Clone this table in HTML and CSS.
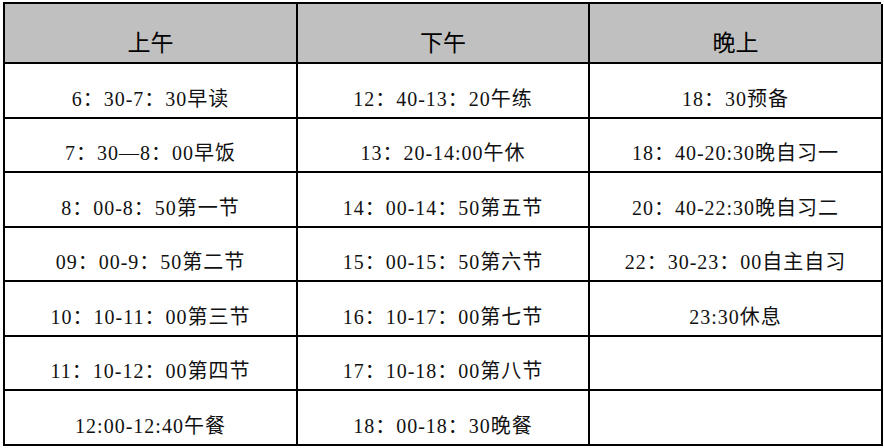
FILE: index.html
```html
<!DOCTYPE html>
<html lang="zh">
<head>
<meta charset="utf-8">
<link rel="stylesheet" href="styles.css">
</head>
<body>
<div class="table">
  <div class="cell head">上午</div>
  <div class="cell head">下午</div>
  <div class="cell head">晚上</div>

  <div class="cell">6：30-7：30早读</div>
  <div class="cell">12：40-13：20午练</div>
  <div class="cell">18：30预备</div>

  <div class="cell">7：30—8：00早饭</div>
  <div class="cell">13：20-14:00午休</div>
  <div class="cell">18：40-20:30晚自习一</div>

  <div class="cell">8：00-8：50第一节</div>
  <div class="cell">14：00-14：50第五节</div>
  <div class="cell">20：40-22:30晚自习二</div>

  <div class="cell">09：00-9：50第二节</div>
  <div class="cell">15：00-15：50第六节</div>
  <div class="cell">22：30-23：00自主自习</div>

  <div class="cell">10：10-11：00第三节</div>
  <div class="cell">16：10-17：00第七节</div>
  <div class="cell">23:30休息</div>

  <div class="cell">11：10-12：00第四节</div>
  <div class="cell">17：10-18：00第八节</div>
  <div class="cell"></div>

  <div class="cell">12:00-12:40午餐</div>
  <div class="cell">18：00-18：30晚餐</div>
  <div class="cell"></div>
</div>
</body>
</html>
```

FILE: styles.css
```css
html, body {
  margin: 0;
  padding: 0;
  background: #ffffff;
}

body {
  padding: 2px 0 0 3px;
  font-family: "Liberation Serif", "Noto Sans CJK SC", serif;
  color: #111;
}

.table {
  display: grid;
  width: 878px;
  grid-template-columns: 293px 292px 293px;
  grid-template-rows: 60px repeat(7, 54.5px);
  border-top: 2px solid #000;
  border-left: 2px solid #000;
  box-sizing: border-box;
}

.cell {
  display: flex;
  align-items: center;
  justify-content: center;
  box-sizing: border-box;
  border-right: 2px solid #000;
  border-bottom: 2px solid #000;
  padding-top: 14px;
  font-size: 20px;
  letter-spacing: 1px;
  white-space: nowrap;
}

.head {
  background: #c0c0c0;
  font-size: 23px;
  font-weight: 400;
  letter-spacing: 0;
  padding-top: 16px;
  color: #000;
}
```
